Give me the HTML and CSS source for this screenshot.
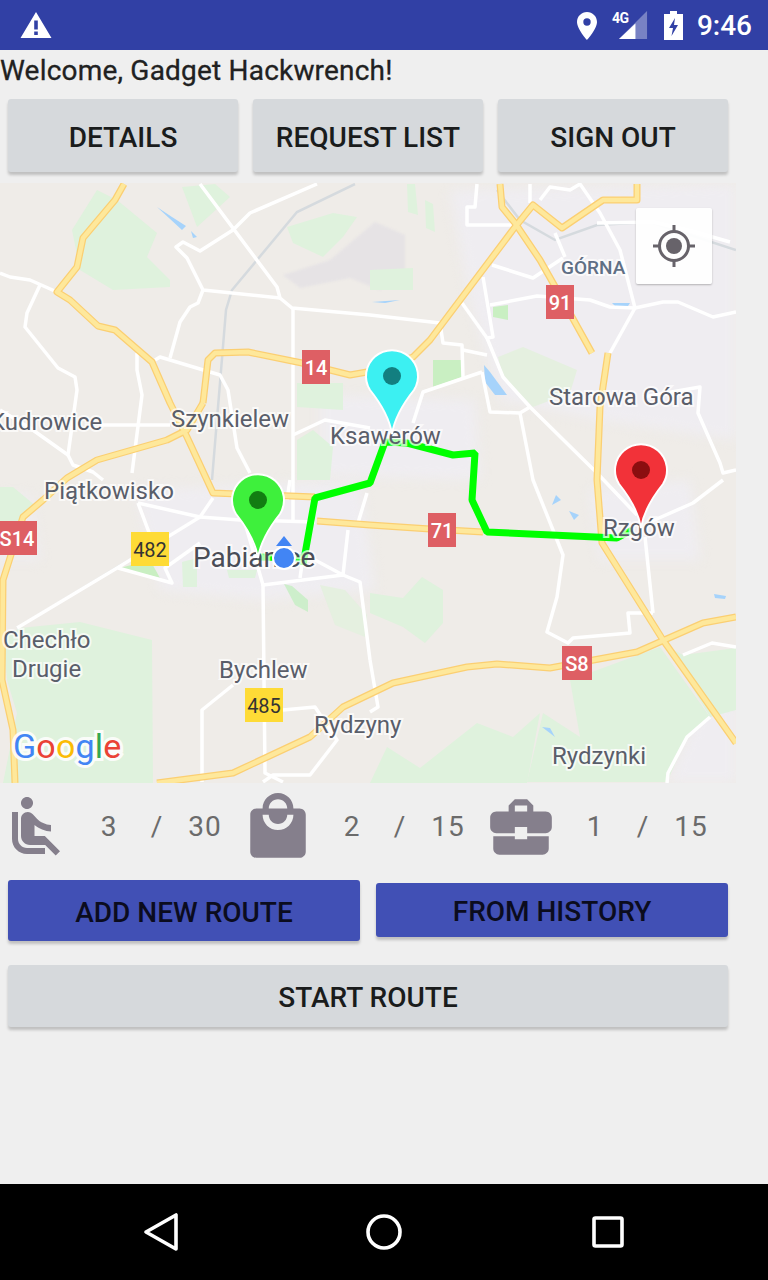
FILE: index.html
```html
<!DOCTYPE html>
<html lang="pl">
<head>
    <meta charset="UTF-8">
    <meta name="viewport" content="width=device-width, initial-scale=1.0">
    <title>Route</title>
    <link rel="stylesheet" href="styles.css">
</head>
<body>
    <div class="status-bar">
        <svg class="status-warning" viewBox="0 0 32 28"><path d="M16 1 L31.5 27 L.5 27 Z M14.2 9.5 V18.5 H17.8 V9.5 Z M14.2 20.5 V24 H17.8 V20.5 Z" fill="#fff" fill-rule="evenodd"/></svg>
        <div class="status-right">
            <svg class="status-pin" viewBox="0 0 20 28"><path d="M10 0 C4.5 0 0 4.4 0 10 C0 17 10 28 10 28 C10 28 20 17 20 10 C20 4.4 15.5 0 10 0 Z M10 6.3 A3.7 3.7 0 1 1 10 13.7 A3.7 3.7 0 1 1 10 6.3 Z" fill="#fff" fill-rule="evenodd"/></svg>
            <div class="status-signal">
                <span class="status-4g">4G</span>
                <svg viewBox="0 0 30 30" class="signal-icon"><path d="M29 0 V29 H0 Z" fill="#fff" opacity=".35"/><path d="M17 13 V29 H0 Z" fill="#fff"/></svg>
            </div>
            <svg class="status-battery" viewBox="0 0 19 29"><path d="M6 0 H13 V3 H19 V29 H0 V3 H6 Z M11 7 L5 17 H9 L7.5 25 L14 14 H10 Z" fill="#fff" fill-rule="evenodd"/></svg>
            <span class="status-time">9:46</span>
        </div>
    </div>

    <div class="content">
        <div class="welcome">Welcome, Gadget Hackwrench!</div>

        <div class="top-buttons">
            <button class="btn">DETAILS</button>
            <button class="btn">REQUEST LIST</button>
            <button class="btn">SIGN OUT</button>
        </div>

        <div class="map">
            <svg class="map-canvas" viewBox="0 183 736 600">
                <defs>
                    <g id="yellow-roads">
                        <path d="M124 184 L115 200 L83 238 L77 267 L57 292 L70 300 L98 326 L115 330 L152 362 L170 403 L187 437 L213 493 L315 497"/>
                        <path d="M203 403 L208 360 L215 353 L248 352 L302 363 L350 375 L367 372 L413 357 L430 340 L515 227 L533 205 L562 228 L603 200 L637 200 L637 184"/>
                        <path d="M203 403 L187 430 L167 440 L97 460 L67 478 L43 500 L23 517 L3 580 L2 680 L13 730 L15 783"/>
                        <path d="M317 521 L370 525 L430 529 L483 532"/>
                        <path d="M500 184 L502 207 L515 223 L540 260 L557 290 L592 353"/>
                        <path d="M608 353 L600 407 L597 480 L602 543 L663 640 L736 743"/>
                        <path d="M157 783 L233 773 L310 737 L343 707 L393 683 L467 667 L497 664 L550 668 L637 652 L703 623 L736 617"/>
                    </g>
                    <path id="pin" d="M0 29 C-3 10 -14 -5 -22 -15 A26 26 0 1 1 22 -15 C14 -5 3 10 0 29 Z"/>
                </defs>

                <rect x="0" y="183" width="736" height="600" fill="#efece8"/>

                <!-- town patches -->
                <path class="town" d="M135 490 L360 480 L375 590 L265 600 L160 590 Z"/>
                <path class="town" d="M320 395 L475 400 L480 480 L320 475 Z"/>
                <path class="town" d="M450 190 L736 184 L736 440 L600 420 L500 400 L470 300 Z"/>
                <path class="town" d="M590 490 L690 480 L700 560 L600 560 Z"/>
                <path class="town" d="M667 783 L700 710 L736 700 L736 783 Z"/>
                <path class="town" d="M0 495 L30 495 L40 560 L0 560 Z"/>
                <path class="gray-area" d="M283 275 L330 260 L375 222 L405 235 L405 275 L380 290 L350 278 L300 288 Z"/>

                <!-- woods -->
                <path class="wood" d="M72 230 L97 190 L117 200 L157 233 L147 257 L170 280 L170 287 L113 290 L80 270 Z"/>
                <path class="wood" d="M182 187 L197 227 L230 197 L215 184 Z"/>
                <path class="wood" d="M287 227 L333 213 L357 217 L343 237 L323 257 L293 243 Z"/>
                <path class="wood" d="M297 383 L343 383 L343 410 L297 407 Z"/>
                <path class="wood" d="M297 440 L313 430 L333 447 L330 480 L297 480 Z"/>
                <path class="wood" d="M80 622 L152 640 L153 783 L3 783 L17 713 L7 680 L3 637 L20 628 Z"/>
                <path class="wood" d="M0 487 L13 487 L37 507 L20 523 L0 523 Z"/>
                <path class="wood" d="M570 680 L660 647 L710 717 L687 737 L667 782 L527 782 L543 713 L580 737 Z"/>
                <path class="wood" d="M370 783 L387 747 L420 768 L477 723 L513 737 L540 713 L527 783 Z"/>
                <path class="wood" d="M370 593 L403 598 L422 577 L443 590 L443 623 L425 643 L403 627 L370 613 Z"/>
                <path class="wood" d="M683 655 L736 648 L736 710 L710 717 L668 647 Z"/>
                <path class="wood-pale" d="M498 357 L523 347 L577 370 L570 393 L533 407 L503 377 Z"/>
                <path class="wood" d="M370 270 L413 268 L413 290 L370 290 Z"/>
                <path class="wood" d="M407 184 L415 184 L418 215 L408 212 Z"/>
                <path class="wood" d="M425 200 L433 204 L435 232 L426 228 Z"/>
                <path class="wood" d="M227 570 L257 570 L255 578 L229 578 Z"/>
                <path class="wood" d="M182 562 L197 558 L197 587 L183 587 Z"/>
                <path class="wood-pale" d="M320 585 L345 590 L367 615 L365 637 L335 625 Z"/>
                <path class="wood-soft" d="M284 584 L292 586 L308 600 L308 612 L295 605 Z"/>
                <path class="wood-dark" d="M433 360 L462 360 L462 377 L433 387 Z"/>
                <path class="wood-dark" d="M493 307 L508 305 L508 320 L493 317 Z"/>
                <path class="wood-dark" d="M120 568 L150 560 L160 578 Z"/>

                <!-- water -->
                <path class="water" d="M157 207 L172 217 L186 226 L182 230 Z"/>
                <path class="water" d="M191 231 L197 237 L193 238 Z"/>
                <path class="water" d="M484 365 L490 372 L507 395 L495 395 L485 382 Z"/>
                <path class="water" d="M612 303 L630 303 L628 306 L615 306 Z"/>
                <path class="water" d="M556 495 L561 500 L552 505 Z"/>
                <path class="water" d="M569 511 L579 515 L574 520 Z"/>
                <path class="water" d="M714 594 L726 596 L725 599 L715 598 Z"/>
                <path class="water" d="M542 727 L550 728 L555 737 Z"/>
                <path class="water" d="M372 302 L400 300 L385 303 Z"/>

                <!-- railway -->
                <path class="rail" d="M355 184 L297 212 L232 290 L226 310 L212 480 M17 628 L200 517"/>
                <path class="rail" d="M497 190 L520 220 L555 240 L597 225 L650 222 L736 250"/>

                <!-- local roads -->
                <g class="road-white">
                    <path d="M200 184 L277 287 L280 298 L292 308 L370 315 L440 323 L443 343 L462 345 L463 377"/>
                    <path d="M317 184 L250 213 L233 230 L200 251 L183 242 L176 247 L187 258 L203 290 L280 298"/>
                    <path d="M203 290 L198 303 L190 307 L180 322 L170 358"/>
                    <path d="M155 360 L160 357 L220 375 L228 390 L237 448 L250 473"/>
                    <path d="M137 353 L137 370 L142 395 L132 473"/>
                    <path d="M0 273 L10 277 L30 280 L57 292"/>
                    <path d="M40 285 L27 313 L25 327 L58 368 L75 377 L77 390 L68 455 L73 465 L93 472 L103 480"/>
                    <path d="M100 425 L170 425"/>
                    <path d="M0 410 L30 428 L68 455"/>
                    <path d="M293 308 L293 520"/>
                    <path d="M293 435 L325 420 L370 428"/>
                    <path d="M477 184 L475 207 L467 207 L467 225 L513 225"/>
                    <path d="M530 184 L530 203"/>
                    <path d="M540 200 L550 187 L570 190 L580 184 L600 213 L620 250 L635 308 L610 353"/>
                    <path d="M635 308 L663 302 L678 302 L713 317 L736 312"/>
                    <path d="M490 305 L537 296 L590 300 L610 307 L635 308"/>
                    <path d="M492 265 L533 278 L563 258"/>
                    <path d="M555 233 L565 257"/>
                    <path d="M597 223 L653 222"/>
                    <path d="M653 222 L695 232 L730 242"/>
                    <path d="M483 277 L493 337 L487 338 L503 377 L530 407 L597 473 L637 515"/>
                    <path d="M462 303 L487 338"/>
                    <path d="M463 350 L487 355"/>
                    <path d="M482 372 L423 392 L413 423"/>
                    <path d="M482 372 L490 412 L520 413 L530 407"/>
                    <path d="M520 413 L533 480 L563 555 L557 597 L547 632 L568 643 L573 638 L630 633 L628 613 L653 613"/>
                    <path d="M643 397 L700 387 L698 413 L720 463 L723 473 L736 470"/>
                    <path d="M645 537 L653 613"/>
                    <path d="M650 522 L693 503 L723 480"/>
                    <path d="M683 655 L712 643 L736 647"/>
                    <path d="M710 717 L687 737 L668 773 L667 783"/>
                    <path d="M370 660 L378 707 L370 712"/>
                    <path d="M17 628 L117 568 L200 517 L213 498"/>
                    <path d="M118 568 L172 583 L165 568 L200 543"/>
                    <path d="M138 503 L200 517 L240 520 L315 522"/>
                    <path d="M138 503 L150 535"/>
                    <path d="M245 523 L263 585 L343 575 L360 582 L370 660"/>
                    <path d="M263 585 L265 773 L283 782"/>
                    <path d="M315 560 L343 575 L348 530"/>
                    <path d="M300 578 L303 557"/>
                    <path d="M202 782 L202 710 L233 685"/>
                    <path d="M283 710 L315 707 L337 740 L310 775 L273 775 L263 782"/>
                    <path d="M290 480 L287 500"/>
                    <path d="M367 493 L358 523"/>
                </g>

                <!-- main roads -->
                <use href="#yellow-roads" class="road-casing"/>
                <use href="#yellow-roads" class="road-fill"/>

                <!-- route -->
                <path class="route" d="M303 565 L315 498 L370 483 L385 442 L407 443 L453 455 L475 453 L472 500 L487 532 L617 538 L632 530"/>
                <path class="route" d="M258 557 L303 558"/>

                <!-- places -->
                <g class="map-label">
                    <text x="-10" y="430">Kudrowice</text>
                    <text x="171" y="427">Szynkielew</text>
                    <text x="330" y="444">Ksawerów</text>
                    <text x="549" y="405">Starowa Góra</text>
                    <text x="44" y="499">Piątkowisko</text>
                    <text x="3" y="648">Chechło</text>
                    <text x="12" y="677">Drugie</text>
                    <text x="219" y="678">Bychlew</text>
                    <text x="314" y="733">Rydzyny</text>
                    <text x="603" y="536">Rzgów</text>
                    <text x="552" y="764">Rydzynki</text>
                    <text class="label-big" x="193" y="567">Pabianice</text>
                    <text class="label-small" x="561" y="274">GÓRNA</text>
                </g>

                <!-- road numbers -->
                <g class="shield-red">
                    <rect x="302" y="350" width="28" height="34"/><text x="316" y="375">14</text>
                    <rect x="546" y="285" width="28" height="34"/><text x="560" y="310">91</text>
                    <rect x="428" y="513" width="28" height="34"/><text x="442" y="538">71</text>
                    <rect x="-2" y="521" width="39" height="34"/><text x="17" y="546">S14</text>
                    <rect x="562" y="646" width="30" height="34"/><text x="577" y="671">S8</text>
                </g>
                <g class="shield-yellow">
                    <rect x="131" y="532" width="38" height="34"/><text x="150" y="557">482</text>
                    <rect x="245" y="688" width="38" height="34"/><text x="264" y="713">485</text>
                </g>

                <!-- my location -->
                <path d="M284 536 L292 546 L276 546 Z" fill="#4285f4"/>
                <circle cx="284" cy="558" r="11" fill="#4285f4" stroke="#fff" stroke-width="2"/>

                <!-- markers -->
                <use href="#pin" x="258" y="529" class="pin" fill="#3ef03c"/>
                <circle cx="258" cy="500" r="9" fill="#127d12"/>
                <use href="#pin" x="392" y="405" class="pin" fill="#3cf0f2"/>
                <circle cx="392" cy="376" r="9" fill="#137f80"/>
                <use href="#pin" x="641" y="499" class="pin" fill="#f23239"/>
                <circle cx="641" cy="470" r="9" fill="#8b0e10"/>

                <!-- logo -->
                <text class="logo" x="13" y="758"><tspan fill="#4285f4">G</tspan><tspan fill="#ea4335">o</tspan><tspan fill="#fbbc05">o</tspan><tspan fill="#4285f4">g</tspan><tspan fill="#34a853">l</tspan><tspan fill="#ea4335">e</tspan></text>
            </svg>

            <div class="locate-btn">
                <svg viewBox="0 0 44 44" class="locate-icon">
                    <circle cx="22" cy="22" r="14.5" fill="none" stroke="#67636a" stroke-width="3"/>
                    <circle cx="22" cy="22" r="8" fill="#67636a"/>
                    <path d="M22 1 V8 M22 36 V43 M1 22 H8 M36 22 H43" stroke="#67636a" stroke-width="3"/>
                </svg>
            </div>
        </div>

        <div class="stats">
            <div class="stat-group">
                <svg class="stat-icon" viewBox="0 0 24 24"><path d="M7.59 5.41c-.78-.78-.78-2.05 0-2.83.78-.78 2.05-.78 2.83 0 .78.78.78 2.05 0 2.83-.79.79-2.05.79-2.83 0zM6 16V7H4v9c0 2.76 2.24 5 5 5h6v-2H9c-1.66 0-3-1.34-3-3zm14 4.07L14.93 15H11.5v-3.68c1.4 1.15 3.6 2.16 5.5 2.16v-2.16c-1.66.02-3.61-.87-4.67-2.04l-1.4-1.55c-.19-.21-.43-.38-.69-.5-.29-.14-.62-.23-.96-.23h-.03C8.01 7 7 8.01 7 9.25V15c0 1.66 1.34 3 3 3h5.07l3.5 3.5L20 20.07z"/></svg>
                <span>3</span><span>/</span><span>30</span>
            </div>
            <div class="stat-group">
                <svg class="stat-icon stat-icon-wide" viewBox="0 0 24 24"><path d="M19 6h-2c0-2.76-2.24-5-5-5S7 3.24 7 6H5c-1.1 0-1.99.9-1.99 2L3 20c0 1.1.9 2 2 2h14c1.1 0 2-.9 2-2V8c0-1.1-.9-2-2-2zm-7-3c1.66 0 3 1.34 3 3H9c0-1.66 1.34-3 3-3zm0 10c-2.76 0-5-2.24-5-5h2c0 1.66 1.34 3 3 3s3-1.34 3-3h2c0 2.76-2.24 5-5 5z"/></svg>
                <span>2</span><span>/</span><span>15</span>
            </div>
            <div class="stat-group">
                <svg class="stat-icon stat-icon-wide" viewBox="0 0 24 24"><path d="M10 16v-1H3.01L3 19c0 1.11.89 2 2 2h14c1.11 0 2-.89 2-2v-4h-7v1h-4zm10-9h-4.01V5l-2-2h-4l-2 2v2H4c-1.1 0-2 .9-2 2v3c0 1.11.89 2 2 2h6v-2h4v2h6c1.1 0 2-.9 2-2V9c0-1.1-.9-2-2-2zm-6 0h-4V5h4v2z"/></svg>
                <span>1</span><span>/</span><span>15</span>
            </div>
        </div>

        <div class="route-buttons">
            <button class="btn btn-blue btn-tall">ADD NEW ROUTE</button>
            <button class="btn btn-blue btn-short">FROM HISTORY</button>
        </div>

        <button class="btn btn-start">START ROUTE</button>
    </div>

    <div class="nav-bar">
        <svg viewBox="0 0 36 40" class="nav-back"><path d="M33 3 V37 L3 20 Z" fill="none" stroke="#fff" stroke-width="3.6" stroke-linejoin="round"/></svg>
        <svg viewBox="0 0 36 36" class="nav-home"><circle cx="18" cy="18" r="16" fill="none" stroke="#fff" stroke-width="3.6"/></svg>
        <svg viewBox="0 0 32 32" class="nav-recent"><rect x="2" y="2" width="28" height="28" rx="1.5" fill="none" stroke="#fff" stroke-width="3.6"/></svg>
    </div>
</body>
</html>
```

FILE: styles.css
```css
* {
    margin: 0;
    padding: 0;
    box-sizing: border-box;
    font-family: 'Roboto', sans-serif;
}

body {
    background-color: #efefef;
    width: 768px;
    height: 1280px;
    display: flex;
    flex-direction: column;
    overflow: hidden;
}

/* status bar */
.status-bar {
    height: 50px;
    background-color: #3140a5;
    display: flex;
    justify-content: space-between;
    align-items: center;
    padding: 0 16px 0 20px;
    flex-shrink: 0;
}

.status-warning {
    width: 32px;
    height: 28px;
    margin-top: -1px;
}

.status-right {
    display: flex;
    align-items: center;
}

.status-pin {
    width: 20px;
    height: 28px;
    margin-top: 1px;
}

.status-signal {
    width: 36px;
    height: 30px;
    margin-left: 15px;
    position: relative;
}

.status-4g {
    position: absolute;
    left: 0;
    top: 0;
    color: #fff;
    font-size: 14px;
    font-weight: 700;
    letter-spacing: -0.5px;
    line-height: 16px;
}

.signal-icon {
    position: absolute;
    right: 0;
    top: 1px;
    width: 29px;
    height: 29px;
}

.status-battery {
    width: 19px;
    height: 29px;
    margin-left: 16px;
}

.status-time {
    color: #fff;
    font-size: 28px;
    font-weight: 500;
    margin-left: 14px;
}

/* main */
.content {
    flex: 1;
}

.welcome {
    color: #212121;
    font-size: 28px;
    letter-spacing: 0.2px;
    -webkit-text-stroke: 0.3px #212121;
    height: 49px;
    line-height: 42px;
}

.top-buttons {
    display: flex;
    gap: 15px;
    padding: 0 40px 0 8px;
}

.btn {
    background-color: #d6d9dc;
    color: #1a1c1c;
    border: none;
    border-radius: 3px;
    font-size: 28px;
    font-weight: 500;
    padding-top: 3px;
    box-shadow: 0 3px 3px rgba(0, 0, 0, 0.2);
}

.top-buttons .btn {
    flex: 1;
    height: 73px;
}

.map {
    position: relative;
    width: 736px;
    height: 600px;
    margin-top: 11px;
}

.map-canvas {
    display: block;
    width: 736px;
    height: 600px;
}

.town {
    fill: #efedf1;
    filter: blur(6px);
}

.gray-area {
    fill: #e6e3e5;
    filter: blur(1px);
}

.wood {
    fill: #dff2dd;
}

.wood-pale {
    fill: #e5f0e0;
}

.wood-soft {
    fill: #cdeecb;
}

.wood-dark {
    fill: #c9efc2;
}

.water {
    fill: #a6d3fb;
}

.rail {
    fill: none;
    stroke: #d5dade;
    stroke-width: 2.5;
}

.road-white path {
    fill: none;
    stroke: #fff;
    stroke-width: 3.5;
    stroke-linejoin: round;
}

.road-casing {
    fill: none;
    stroke: #fbcf72;
    stroke-width: 7;
    stroke-linejoin: round;
}

.road-fill {
    fill: none;
    stroke: #fee89b;
    stroke-width: 4.5;
    stroke-linejoin: round;
}

.route {
    fill: none;
    stroke: #00ff00;
    stroke-width: 7;
    stroke-linejoin: bevel;
}

.map-label text {
    font-size: 24px;
    fill: #5a5e6a;
    stroke: rgba(255, 255, 255, 0.7);
    stroke-width: 4px;
    paint-order: stroke;
}

.map-label .label-big {
    font-size: 28px;
    fill: #4a4d57;
}

.map-label .label-small {
    font-size: 19px;
    font-weight: 500;
    fill: #5f6f85;
}

.shield-red rect {
    fill: #de5f64;
}

.shield-yellow rect {
    fill: #fedb36;
}

.shield-red text,
.shield-yellow text {
    font-size: 20px;
    font-weight: 500;
    text-anchor: middle;
}

.shield-red text {
    fill: #fff;
}

.shield-yellow text {
    fill: #333;
    font-weight: 400;
}

.pin {
    stroke: #fff;
    stroke-width: 2;
}

.logo {
    font-family: 'Inter', sans-serif;
    font-size: 34px;
    font-weight: 400;
    letter-spacing: 0.2px;
    stroke: #fff;
    stroke-width: 6px;
    stroke-opacity: 0.85;
    paint-order: stroke;
}

.locate-btn {
    position: absolute;
    left: 636px;
    top: 25px;
    width: 76px;
    height: 76px;
    background-color: rgba(255, 255, 255, 0.93);
    border-radius: 2px;
    box-shadow: 0 1px 2px rgba(0, 0, 0, 0.25);
    display: flex;
    justify-content: center;
    align-items: center;
}

.locate-icon {
    width: 44px;
    height: 44px;
}

/* counters */
.stats {
    display: grid;
    grid-template-columns: repeat(3, 243px);
    height: 87px;
    align-items: center;
}

.stat-group {
    display: grid;
    grid-template-columns: 85px 48px 48px 48px;
    align-items: center;
    color: #6b6b6b;
    font-size: 28px;
    letter-spacing: 1px;
    text-align: center;
}

.stat-icon {
    width: 72px;
    height: 72px;
    fill: #857f8c;
}

.stat-icon-wide {
    width: 74px;
    height: 74px;
    margin-left: -2px;
}

.route-buttons {
    display: flex;
    gap: 16px;
    padding: 10px 40px 0 8px;
    align-items: flex-start;
    height: 71px;
}

.btn-blue {
    flex: 1;
    background-color: #4150b5;
    color: #0b0c1e;
}

.btn-tall {
    height: 61px;
}

.btn-short {
    height: 54px;
    margin-top: 3px;
}

.btn-start {
    display: block;
    width: 720px;
    height: 62px;
    margin: 24px 0 0 8px;
}

/* bottom navigation */
.nav-bar {
    height: 96px;
    background-color: #000;
    flex-shrink: 0;
    display: flex;
    align-items: center;
    gap: 187px;
    padding-left: 143px;
}

.nav-back {
    width: 36px;
    height: 40px;
}

.nav-home {
    width: 36px;
    height: 36px;
}

.nav-recent {
    width: 32px;
    height: 32px;
    margin-left: 3px;
}
```
